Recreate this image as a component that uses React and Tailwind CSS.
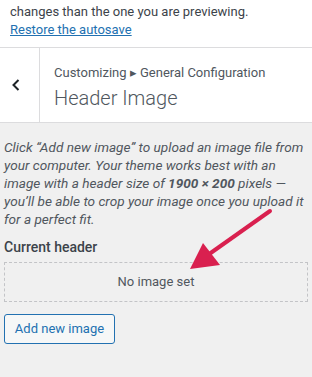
import React from "react";

export default function App() {
  return (
    <div className="relative w-[312px] h-[377px] overflow-hidden bg-[#f0f0f0] font-['Roboto',sans-serif] text-[#3c434a]">
      <div className="bg-white border-b border-[#dcdcde] px-[10px] pt-[3px] h-[48px] text-[13px] leading-[18px]">
        <p>changes than the one you are previewing.</p>
        <a href="#" className="text-[#2271b1] underline">Restore the autosave</a>
      </div>

      <div className="flex h-[75px] bg-white border-b border-[#dcdcde]">
        <button className="w-[40px] shrink-0 border-r border-[#dcdcde] flex items-center pl-[10px]">
          <svg width="12" height="12" viewBox="0 0 12 12">
            <path d="M8.5 1 L3.5 6 L8.5 11" fill="none" stroke="#1d2327" strokeWidth="2" />
          </svg>
        </button>
        <div className="pl-[14px] pt-[16px]">
          <div className="text-[13px] leading-[18px] text-[#50575e]">Customizing ▸ General Configuration</div>
          <h3 className="mt-[3px] text-[20px] leading-[26px] font-light text-[#50575e]">Header Image</h3>
        </div>
      </div>

      <div className="px-[4px] pt-[15px]">
        <p className="italic text-[13.6px] leading-[18px] text-[#50575e] pr-[4px]">
          Click “Add new image” to upload an image file from your computer. Your theme works best with an image with a header size of <strong className="font-bold">1900 × 200</strong> pixels — you’ll be able to crop your image once you upload it for a perfect fit.
        </p>
        <div className="mt-[10px] text-[14px] leading-[18px] font-medium text-[#3c434a]">Current header</div>
        <div className="mt-[6px] h-[40px] border border-dashed border-[#c3c4c7] flex items-center justify-center text-[13px] text-[#50575e]">
          No image set
        </div>
        <button className="mt-[12px] h-[30px] w-[111px] rounded-[3px] border border-[#2271b1] bg-[#f6f7f7] text-[#2271b1] text-[13px]">
          Add new image
        </button>
      </div>

      <svg className="absolute left-0 top-0 pointer-events-none" width="312" height="377" viewBox="0 0 312 377">
        <line x1="270" y1="211" x2="205" y2="257" stroke="#d9204f" strokeWidth="4" strokeLinecap="round" />
        <polygon points="190,269 203,243 220,265" fill="#d9204f" />
      </svg>
    </div>
  );
}
